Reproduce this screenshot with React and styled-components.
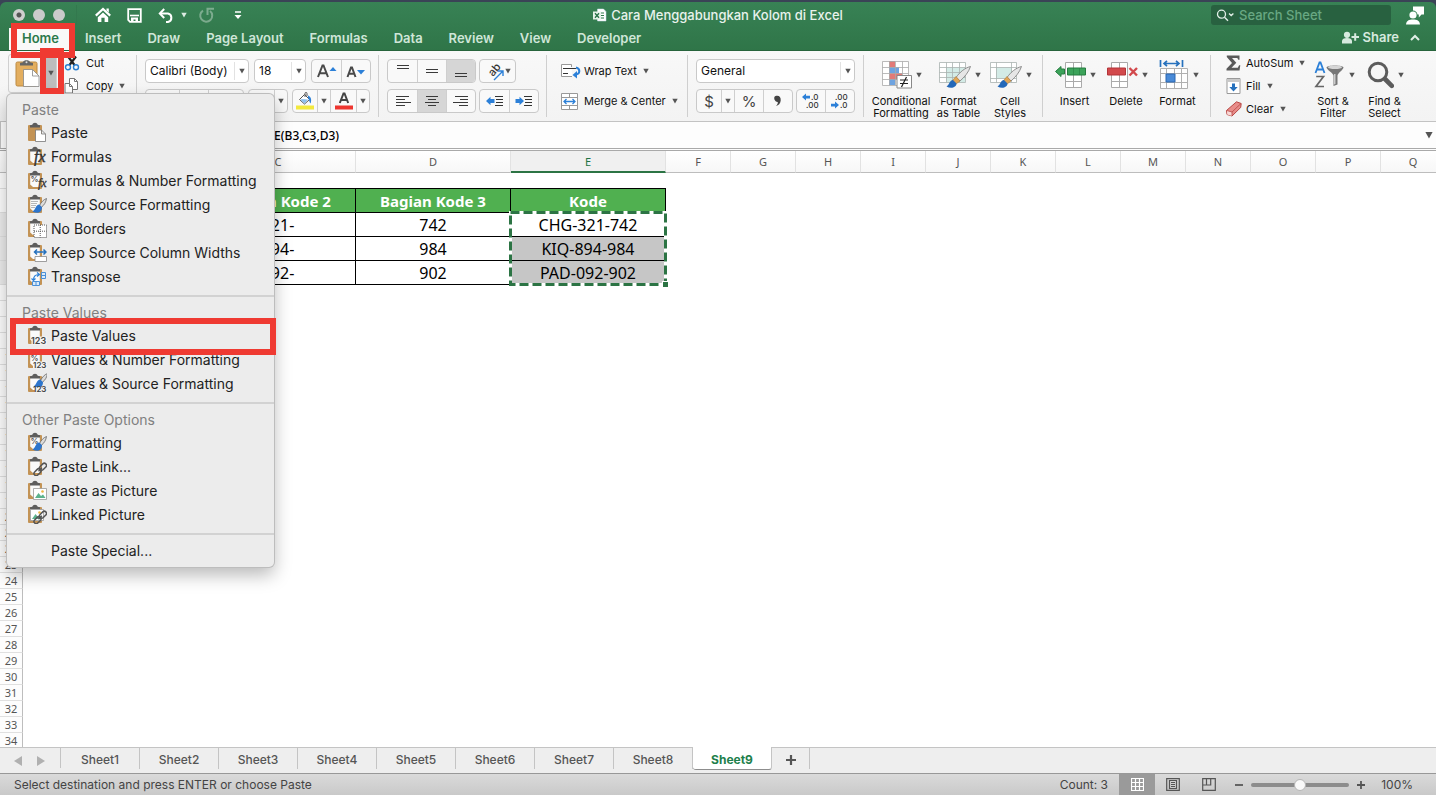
import React from "react";
import styled, { createGlobalStyle, css } from "styled-components";

const UI = `Inter, "Liberation Sans", sans-serif`;
const SHEET = `"Noto Sans", "Open Sans", sans-serif`;

const GlobalStyle = createGlobalStyle`
  *, *::before, *::after { box-sizing: border-box; }
  body { margin: 0; background: #fff; font-family: ${UI}; overflow: hidden; }
  button, input, select { font: inherit; color: inherit; margin: 0; }
  button { background: none; border: 0; padding: 0; cursor: default; }
  svg { display: block; flex: none; }
`;

const Window = styled.div`
  position: relative;
  display: flex;
  flex-direction: column;
  height: 100vh;
  min-height: 640px;
  overflow: hidden;
  background: #fff;
`;

/* ---------- green header ---------- */

const Desktop = styled.div`
  background: #3a4356;
  padding-top: 2px;
`;

const Header = styled.header`
  background: linear-gradient(#388255, #2f7548);
  border-radius: 6px 6px 0 0;
  border-bottom: 1px solid #27643c;
  color: #fff;
`;

const TitleBar = styled.div`
  display: grid;
  grid-template-columns: 1fr auto 1fr;
  align-items: center;
  height: 26px;
`;

const QuickBar = styled.div`
  display: flex;
  align-items: center;
  padding-left: 13px;
`;

const Light = styled.button`
  width: 12px;
  height: 12px;
  margin-right: 8px;
  border-radius: 50%;
  background: ${(p) => (p.$edited ? "radial-gradient(circle, #555 0 2px, #cfcfcf 3px)" : "#cbcbcb")};
`;

const QuickButton = styled.button`
  display: flex;
  align-items: center;
  justify-content: center;
  width: ${(p) => p.$w || 30}px;
  height: 24px;
  color: #fff;
  opacity: ${(p) => (p.$dim ? 0.35 : 1)};
`;

const LightsGap = styled.span`
  width: 13px;
  height: 20px;
  border-left: 1px solid #33784e;
  margin-left: 3px;
`;

const DocTitle = styled.h1`
  display: flex;
  align-items: center;
  gap: 4px;
  margin: 0;
  font-size: 13px;
  font-weight: 500;
  color: #e8f2ec;
`;

const TitleRight = styled.div`
  display: flex;
  align-items: center;
  justify-content: flex-end;
  gap: 15px;
  padding-right: 12px;
`;

const SearchBox = styled.label`
  display: flex;
  align-items: center;
  gap: 3px;
  width: 180px;
  height: 20px;
  padding-left: 5px;
  border-radius: 3px;
  background: #286140;
`;

const SearchInput = styled.input`
  flex: 1;
  min-width: 0;
  padding: 0;
  border: 0;
  outline: 0;
  background: none;
  font-size: 13px;
  font-weight: 500;
  &::placeholder { color: #68a883; opacity: 1; }
`;

const TabBar = styled.nav`
  display: flex;
  align-items: stretch;
  height: 22px;
  padding: 0 16px 0 9px;
`;

const RibbonTab = styled.button`
  height: 22px;
  padding: 0 13px;
  padding-bottom: 2px;
  font-size: 13px;
  font-weight: 600;
  color: #cfe6d8;
  ${(p) => p.$active && css`
    background: #f9f9f9;
    color: #2b7a4b;
  `}
`;

const ShareArea = styled.div`
  display: flex;
  align-items: center;
  gap: 11px;
  margin-left: auto;
  padding-bottom: 4px;
`;

const ShareButton = styled.button`
  display: flex;
  align-items: center;
  gap: 4px;
  font-size: 13px;
  font-weight: 600;
  color: #d7eadf;
`;

/* ---------- ribbon ---------- */

const Ribbon = styled.section`
  display: flex;
  height: 71px;
  background: linear-gradient(#f8f8f8, #f3f3f3);
  border-bottom: 1px solid #c3c3c3;
  font-size: 11px;
  color: #111;
`;

const Group = styled.div`
  display: flex;
  gap: 4px;
  flex: none;
  width: ${(p) => p.$w}px;
  padding-left: ${(p) => p.$pad ?? 8}px;
  position: relative;
  &::after {
    content: "";
    position: absolute;
    right: 0;
    top: 4px;
    height: 62px;
    border-right: 1px solid ${(p) => (p.$last ? "transparent" : "#cfcfcf")};
  }
`;

const Stack = styled.div`
  display: flex;
  flex-direction: column;
  gap: 6px;
  padding-top: 8px;
`;

const Row = styled.div`
  display: flex;
  gap: ${(p) => p.$gap ?? 3}px;
`;

const frame = css`
  height: 24px;
  border: 1px solid #c9c9c9;
  border-radius: 4px;
`;

const Segments = styled.div`
  ${frame}
  display: flex;
  overflow: hidden;
  background: #f9f9f9;
`;

const Segment = styled.button`
  display: flex;
  align-items: center;
  justify-content: center;
  width: ${(p) => p.$w || 29}px;
  color: #444;
  background: ${(p) => (p.$on ? "#d6d6d6" : "transparent")};
  & + & { border-left: 1px solid ${(p) => (p.$soft ? "#e4e4e4" : "#cfcfcf")}; }
`;

const NumberSign = styled(Segment)`
  font-size: 15px;
`;

const SelectFrame = styled.div`
  ${frame}
  display: flex;
  align-items: center;
  width: ${(p) => p.$w}px;
  background: #fff;
  padding-right: 3px;
`;

const Select = styled.select`
  flex: 1;
  min-width: 0;
  height: 22px;
  padding: 0 0 2px 4px;
  border: 0;
  outline: 0;
  appearance: none;
  background: none;
  font-size: 12px;
`;

const SelectArrow = styled.span`
  display: flex;
  align-items: center;
  height: 18px;
  padding-left: 4px;
  border-left: 1px solid #e2e2e2;
`;

const PasteButton = styled.button`
  display: flex;
  width: 49px;
  height: 39px;
  margin-top: 3px;
  padding: 4px 0 0 6px;
  border: 1px solid #d0d0d0;
  border-radius: 3px;
`;

const PasteDrop = styled.span`
  display: flex;
  align-items: center;
  justify-content: center;
  width: 10px;
  height: 33px;
  margin: -3px 0 0 5px;
  background: #bdbdbd;
`;

const TextButton = styled.button`
  display: flex;
  align-items: center;
  gap: 6px;
  height: ${(p) => p.$h || 24}px;
  text-align: left;
  white-space: nowrap;
`;

const IconSlot = styled.span`
  display: flex;
  flex: none;
  align-items: center;
  width: ${(p) => p.$w}px;
  margin-right: -6px;
`;

const SideTools = styled.div`
  display: flex;
  flex-direction: column;
  flex: none;
  width: ${(p) => p.$w}px;
  margin-left: 3px;
`;

const BigButton = styled.button`
  display: flex;
  flex-direction: column;
  align-items: center;
  width: ${(p) => p.$w}px;
  padding-top: 7px;
  line-height: 12px;
  text-align: center;
`;

const BigIcon = styled.span`
  display: flex;
  align-items: center;
  justify-content: center;
  gap: 4px;
  height: 33px;
  margin-bottom: 4px;
  padding-left: 2px;
`;

/* ---------- formula bar ---------- */

const FormulaBar = styled.div`
  display: flex;
  align-items: center;
  height: 29px;
  background: #fdfdfd;
  border-bottom: 3px double #a9a9a9;
`;

const NameBox = styled.input`
  width: 96px;
  height: 26px;
  border: 1px solid #c2c2c2;
  border-width: 0 1px;
  padding: 0 8px;
  font-size: 12px;
`;

const FormulaInput = styled.input`
  flex: 1;
  min-width: 0;
  margin-left: 92px;
  border: 0;
  outline: 0;
  background: none;
  font-family: ${SHEET};
  font-size: 12px;
  font-weight: 500;
  color: #000;
`;

const ExpandButton = styled.button`
  width: 14px;
  height: 24px;
  display: flex;
  align-items: center;
  justify-content: center;
`;

/* ---------- sheet ---------- */

const SheetArea = styled.main`
  flex: 1;
  min-height: 0;
  overflow: hidden;
`;

const Grid = styled.table`
  table-layout: fixed;
  width: 0;
  border-collapse: separate;
  border-spacing: 0;
`;

const Col = styled.col`
  width: ${(p) => p.$w}px;
`;

const ColHead = styled.th`
  height: 22px;
  padding: 0;
  border-right: 1px solid #e2e2e2;
  border-bottom: 1px solid #bdbdbd;
  background: linear-gradient(#fff, #f7f7f7);
  font-family: ${SHEET};
  font-size: 11px;
  font-weight: 400;
  color: #555;
  ${(p) => p.$on && css`
    background: #f0f0f0;
    color: #217346;
    border-bottom: 2px solid #2c7444;
  `}
`;

const RowHead = styled.th`
  height: ${(p) => p.$h}px;
  padding: 0;
  border-right: 1px solid #bdbdbd;
  border-bottom: 1px solid #e0e0e0;
  background: ${(p) => (p.$on ? "#ececec" : "#fdfdfd")};
  font-family: ${SHEET};
  font-size: 11px;
  line-height: 12px;
  font-weight: 400;
  color: #555;
`;

const Cell = styled.td`
  position: relative;
  padding: 0;
  font-family: ${SHEET};
  font-size: 16px;
  line-height: 20px;
  text-align: center;
  white-space: nowrap;
  color: #000;
  ${(p) => p.$edge && css`border-bottom: 1px solid #000;`}
  ${(p) => p.$box && css`
    border-bottom: 1px solid #000;
    border-right: 1px solid #000;
  `}
  ${(p) => p.$head && css`
    background: #50b050;
    color: #fff;
    font-size: 15px;
    font-weight: 700;
  `}
  ${(p) => p.$shade && css`background: #c6c6c6;`}
`;

const Marquee = styled.svg`
  position: absolute;
  left: -2px;
  top: -2px;
  z-index: 1;
  overflow: visible;
`;

/* ---------- bottom bars ---------- */

const SheetTabs = styled.nav`
  display: flex;
  height: 26px;
  background: #eee;
  border-top: 1px solid #c4c4c4;
`;

const TabArrows = styled.div`
  display: flex;
  align-items: center;
  gap: 15px;
  width: 61px;
  height: 20px;
  padding: 5px 0 0 14px;
  border-right: 1px solid #c4c4c4;
`;

const SheetTab = styled.button`
  width: ${(p) => p.$w || 79}px;
  height: 21px;
  padding-top: 2px;
  border-right: 1px solid #c4c4c4;
  font-size: 12px;
  font-weight: 500;
  color: #555;
  display: flex;
  align-items: center;
  justify-content: center;
  ${(p) => p.$on && css`
    height: 23px;
    margin-top: -1px;
    background: #fff;
    border-bottom: 1px solid #8d8d8d;
    border-radius: 0 0 3px 3px;
    color: #217f4b;
    font-weight: 700;
  `}
`;

const StatusBar = styled.footer`
  display: flex;
  align-items: center;
  height: 22px;
  padding: 0 23px 0 14px;
  background: linear-gradient(#dadada, #c9c9c9);
  border-top: 1px solid #989898;
  font-size: 12px;
  color: #444;
`;

const Count = styled.span`
  margin-left: auto;
  margin-right: 11px;
`;

const ViewButton = styled.button`
  display: flex;
  align-items: center;
  justify-content: center;
  width: 36px;
  height: 21px;
  color: ${(p) => (p.$on ? "#fff" : "#555")};
  background: ${(p) => (p.$on ? "#9a9a9a" : "transparent")};
`;

const ZoomButton = styled.button`
  display: flex;
  align-items: center;
  justify-content: center;
  width: 24px;
  height: 20px;
`;

const ZoomSlider = styled.input`
  appearance: none;
  width: 98px;
  height: 12px;
  background: none;
  &::-webkit-slider-runnable-track {
    height: 4px;
    border-radius: 2px;
    background: #8c8c8c;
  }
  &::-webkit-slider-thumb {
    appearance: none;
    width: 12px;
    height: 12px;
    margin-top: -4px;
    border: 1px solid #b5b5b5;
    border-radius: 50%;
    background: #fafafa;
  }
`;

const ZoomValue = styled.span`
  width: 40px;
  text-align: right;
`;

/* ---------- paste menu ---------- */

const Menu = styled.div`
  position: absolute;
  left: 7px;
  top: 94px;
  z-index: 3;
  width: 267px;
  padding: 4px 0;
  border-radius: 5px;
  background: #ececec;
  box-shadow: 0 0 0 1px #bdbdbd, 0 8px 18px rgba(0, 0, 0, 0.28);
  font-size: 14px;
  color: #222;
`;

const MenuHead = styled.div`
  height: 23px;
  padding-left: 15px;
  line-height: 24px;
  color: #808080;
`;

const MenuItem = styled.button`
  display: flex;
  align-items: center;
  gap: 4px;
  width: 100%;
  height: 24px;
  padding-left: ${(p) => (p.$plain ? 44 : 20)}px;
  padding-bottom: 2px;
  text-align: left;
  white-space: nowrap;
`;

const MenuRule = styled.hr`
  height: 2px;
  margin: 6px 0 4px;
  border: 0;
  background: #d2d2d2;
`;

const Highlight = styled.div`
  position: absolute;
  z-index: 4;
  left: ${(p) => p.$x}px;
  top: ${(p) => p.$y}px;
  width: ${(p) => p.$w}px;
  height: ${(p) => p.$h}px;
  border: 6px solid #ef3a32;
  pointer-events: none;
`;

/* ---------- icons ---------- */

const Caret = ({ c = "#555", s = 6 }) => (
  <svg width={s} height={s} viewBox="0 0 6 6"><path d="M.3.800h5.400L3 5.600z" fill={c} /></svg>
);

const Svg = ({ w = 20, h = 20, box, children }) => (
  <svg width={w} height={h} viewBox={box || `0 0 ${w} ${h}`} fill="none" aria-hidden="true">{children}</svg>
);

const HomeIcon = () => (
  <Svg w={16} h={16}>
    <path d="M.8 8.600 8 2l7.200 6.600" stroke="#fff" strokeWidth="2.200" />
    <path d="M11.500 1.500h2.300v4l-2.300-2z" fill="#fff" />
    <path d="M8 5.600 2.800 10.300V15h3.600v-4.200h3.200V15h3.600v-4.700z" fill="#fff" />
  </Svg>
);

const SaveIcon = () => (
  <Svg w={15} h={15}>
    <path d="M1.200 1.200h12.600v12.600H3L1.200 12z" stroke="#fff" strokeWidth="1.800" />
    <path d="M3 7.500h9" stroke="#fff" strokeWidth="1.600" />
    <path d="M4 9.500h7V14H8.500v-2.500h-2V14H4z" fill="#fff" />
  </Svg>
);

const UndoIcon = () => (
  <Svg w={16} h={15}>
    <path d="M2 5.500h8a4.300 4.300 0 0 1 0 8.400H8" stroke="#fff" strokeWidth="2" />
    <path d="M6.200 1 1.800 5.500 6.200 10" stroke="#fff" strokeWidth="2" />
  </Svg>
);

const RedoIcon = () => (
  <Svg w={16} h={16}>
    <path d="M5 3.600A6 6 0 1 0 12 4" stroke="#fff" strokeWidth="2" />
    <path d="M9.500 8V1.800H16" stroke="#fff" strokeWidth="2" />
  </Svg>
);

const CustomizeIcon = () => (
  <Svg w={8} h={9}><path d="M1 1h6" stroke="#fff" strokeWidth="1.500" /><path d="M.5 4h7L4 8z" fill="#fff" /></Svg>
);

const DocIcon = () => (
  <Svg w={14} h={14}>
    <path d="M4.500 1h6L13 3.500V13H4.500z" fill="#fff" stroke="#cde" strokeWidth=".5" />
    <path d="M7 5h4M7 7.500h4M7 10h4" stroke="#2f7a4a" />
    <path d="M0 3.500h8v8H0z" fill="#e6f3ea" />
    <path d="m2 5.300 4 4.500m0-4.500-4 4.500" stroke="#257145" strokeWidth="1.300" />
  </Svg>
);

const SearchIcon = () => (
  <Svg w={20} h={13}>
    <circle cx="5.500" cy="5.200" r="4" stroke="#e4f0e9" strokeWidth="1.300" />
    <path d="m8.500 8.200 3.500 3.600" stroke="#e4f0e9" strokeWidth="1.400" />
    <path d="m13 4.500 2.200 2 2.200-2" stroke="#e4f0e9" strokeWidth="1.300" />
  </Svg>
);

const PersonChatIcon = () => (
  <Svg w={18} h={19}>
    <circle cx="7" cy="9" r="3.600" fill="#fff" />
    <path d="M0 18.500c.4-4 3-5 7-5s6.600 1 7 5z" fill="#fff" />
    <path d="M7 .5h11v8h-2.500l-2.700 3V8.500h-1.300A5 5 0 0 0 7 4.500z" fill="#fff" />
  </Svg>
);

const ShareIcon = () => (
  <Svg w={17} h={13}>
    <circle cx="5" cy="3.800" r="3.100" fill="#d7eadf" />
    <path d="M0 12.500V10c0-2 2-3 5-3s5 1 5 3v2.500z" fill="#d7eadf" />
    <path d="M9.500 6H17M13.200 2.200v7.600" stroke="#d7eadf" strokeWidth="2" />
  </Svg>
);

const Chevron = () => (
  <Svg w={10} h={7}><path d="m1 6 4-4 4 4" stroke="#e1efe7" strokeWidth="2" /></Svg>
);

const BigPasteIcon = () => (
  <Svg w={26} h={28}>
    <rect x="1" y="3" width="21" height="24" rx="1.500" fill="#e3ae5f" stroke="#bd8a43" />
    <path d="M5 6.500V4l3-.8C8.500.6 14.500.6 15 3.200l3 .8v2.500z" fill="#666" />
    <circle cx="11.500" cy="3.300" r="1" fill="#ddd" />
    <path d="M8.500 10.500h9l6.500 6.500v10.500H8.500z" fill="#fff" stroke="#888" strokeWidth=".8" />
    <path d="M17.500 10.500V17H24" stroke="#888" strokeWidth=".8" />
  </Svg>
);

const CutIcon = () => (
  <Svg w={16} h={16}>
    <path d="M4 1.500 10.500 10M12 1.500 5.500 10" stroke="#222" strokeWidth="2.200" />
    <circle cx="4" cy="12.300" r="2.500" stroke="#2b7fd0" strokeWidth="1.400" />
    <circle cx="12" cy="12.300" r="2.500" stroke="#2b7fd0" strokeWidth="1.400" />
  </Svg>
);

const CopyIcon = () => (
  <Svg w={16} h={16}>
    <path d="M5.500.5h5l3 3v8h-8z" fill="#fff" stroke="#777" />
    <path d="M10.500.5v3h3" stroke="#777" />
    <path d="M1 5.500h4.500l3 3V15H1z" fill="#fff" stroke="#777" />
    <path d="M5.500 5.500v3h3" stroke="#777" />
  </Svg>
);

const FontSizeIcon = ({ up }) => (
  <Svg w={22} h={16}>
    <path d={up ? "M2 14 6.500 2.500h1L12 14M3.800 10.300h6.400" : "M2.500 14 6 4.500h1L10.500 14M4 10.800h5"} stroke="#4a4a4a" strokeWidth="2" />
    <path d={up ? "M13.500 8 17 4l3.500 4z" : "M12 7h8l-4 4.500z"} fill="#2c80d8" />
  </Svg>
);

const Lines = ({ rows }) => (
  <Svg w={16} h={16}>
    {rows.map(([x, y, w]) => <path key={y} d={`M${x} ${y}h${w}`} stroke="#3a3a3a" strokeWidth="1" />)}
  </Svg>
);

const vTop = [[2, 2.5, 12], [2, 5.5, 12]];
const vMid = [[2, 6.5, 12], [2, 9.5, 12]];
const vBot = [[2, 10.5, 12], [2, 13.5, 12]];
const hLeft = [[1, 3.5, 13], [1, 6.5, 9], [1, 9.5, 15], [1, 12.5, 9]];
const hMid = [[2, 3.5, 12], [4, 6.5, 8], [1, 9.5, 14], [4, 12.5, 8]];
const hRight = [[2, 3.5, 13], [7, 6.5, 8], [0, 9.5, 15], [6, 12.5, 9]];

const OrientIcon = () => (
  <Svg w={20} h={20}>
    <text x="0" y="0" transform="translate(8 16) rotate(-50)" fontFamily="Inter, sans-serif" fontSize="11" fontWeight="500" fill="#333">ab</text>
    <path d="m9 19 9-9M13 10h5v5" stroke="#2c80d8" strokeWidth="1.400" />
  </Svg>
);

const IndentIcon = ({ right }) => (
  <Svg w={18} h={14}>
    <path d="M9 2.500h8M10 5.500h7M10 8.500h7M9 11.500h8" stroke="#333" />
    <path d={right ? "M9 7 4.500 2.700v2.300H.5v4h4v2.300z" : "M0 7l4.500-4.300v2.300h4v4h-4v2.300z"} fill="#2c80d8" />
  </Svg>
);

const WrapIcon = () => (
  <Svg w={20} h={16}>
    <path d="M11 13.500H.5V1.500h10V4" fill="#fff" stroke="#999" />
    <path d="M2 5.500h13M2 10.500h5" stroke="#333" strokeWidth="1.200" />
    <path d="M15 4.500c4.500 1 4.500 6.500-.5 7" stroke="#2c80d8" strokeWidth="2" />
    <path d="m16 8-4.500 4L16 15.500z" fill="#2c80d8" />
  </Svg>
);

const MergeIcon = () => (
  <Svg w={17} h={17}>
    <path d="M.5.500h16v16H.5zM.5 4.500h16M.5 12.500h16M8.500.5v4M8.500 12.500v4" fill="#fff" stroke="#999" />
    <path d="M3 8.500h11M5.500 6 3 8.500 5.500 11M11.500 6 14 8.500 11.500 11" stroke="#2c80d8" strokeWidth="1.300" />
  </Svg>
);

const FillColorIcon = () => (
  <Svg w={20} h={20}>
    <path d="M1 14.500h18v4H1z" fill="#f3e93e" />
    <path d="m4.500 8.500 5-5 5 5-5 4.500z" fill="#fff" stroke="#555" />
    <path d="m6.500 8 6.500.5-3.500 4-4-3.500z" fill="#8ec0ee" />
    <path d="M10 6V2.500c0-1.500 2-1.500 2 0V5" stroke="#555" />
    <path d="M13 4.500c3 1 4 4.500 2.500 8-1.500-1.500-1-4-2.500-5.500z" fill="#2c80d8" />
  </Svg>
);

const FontColorIcon = () => (
  <Svg w={20} h={20}>
    <path d="M1 14.500h18v4H1z" fill="#ee3630" />
    <path d="M5.800 12 9.500 2.500h1l3.700 9.500M7.200 9h5.600" stroke="#444" strokeWidth="2" />
  </Svg>
);

const CommaIcon = () => (
  <Svg w={10} h={14}><path d="M2.500 2c3.500-1 5.500 1 5.200 4.500C7.500 9.500 5.500 11.500 3 12c1.700-1.800 2-3 1.700-4C1.500 8 0 3 2.500 2z" fill="#444" /></Svg>
);

const DecimalIcon = ({ less }) => (
  <Svg w={20} h={20}>
    <g fontFamily="Inter, sans-serif" fontSize="8" fontWeight="500" fill="#333">
      <text x={less ? 5 : 10} y="9">{less ? ".00" : ".0"}</text>
      <text x={less ? 10 : 5} y="17">{less ? ".0" : ".00"}</text>
    </g>
    <path d={less ? "M9 14 5 10.500v2.300H1v2.600h4v2.200z" : "M1 6l4-3.500v2.300h4v2.600H5v2.200z"} fill="#2c80d8" />
  </Svg>
);

const CondIcon = () => (
  <Svg w={30} h={28}>
    <path d="M.5.500h26v24H.5z" fill="#fff" />
    <path d="M7 0h6v6H7zM7 12h13v6H7z" fill="#e27a77" />
    <path d="M7 6h10v6H7zM7 18h6v6H7z" fill="#6ea3e0" />
    <path d="M.5.500h26v24H.5zM.5 6.500h26M.5 12.500h26M.5 18.500h26M7.500.5v24M13.500.5v24M20.500.5v24" stroke="#aaa" strokeWidth=".8" />
    <path d="M15 14.500h14.500V27H15z" fill="#fff" stroke="#888" />
    <path d="M18 19h8M18 22.500h8M24.500 16l-5 10" stroke="#222" strokeWidth="1.200" />
  </Svg>
);

const BrushIcon = ({ table }) => (
  <Svg w={32} h={28}>
    <path d="M.5 1.500h26v20H.5z" fill="#fff" />
    <path d={table ? "M7 6.500h19v15H7z" : "M6 6.500h16v11H6z"} fill="#d3ebe6" />
    <path d={table ? "M.5 1.500h26v20H.5zM.5 6.500h26M.5 11.500h26M.5 16.500h26M7.500 1.500v20M13.500 1.500v20M20.500 1.500v20" : "M.5 1.500h26v20H.5zM.5 6.500h26M6.500 1.500v20M.5 17.500h26M21.500 1.500v20"} stroke="#a9b2b0" strokeWidth=".8" />
    <path d="M31.500 5.500c-6 1.500-11 6-14.500 11l4 3.500c4.500-4 8.500-8.500 10.500-14.500z" fill="#e6e6e6" stroke="#777" strokeWidth=".8" />
    <path d="m17 15.500-3.500 4 3.500 3.500 4-3z" fill="#e0a657" stroke="#b07b35" strokeWidth=".6" />
    <path d="M14 19c-3.500 0-3 4-6.500 6.500 4.500 2.500 10 1 10-3z" fill="#2468b8" />
  </Svg>
);

const InsertIcon = () => (
  <Svg w={31} h={28}>
    <path d="M10.500 1.500h16v25h-16zM18.500 1.500v25M10.500 20.500h16" fill="#fff" stroke="#aaa" />
    <path d="M12.500 7h18v7h-18z" fill="#3ca35a" stroke="#267c40" />
    <path d="M.5 10.500 6 5.500V8h3.500v5H6v2.500z" fill="#3ca35a" stroke="#267c40" />
    <path d="M18.500 7v7M24.500 7v7" stroke="#267c40" strokeWidth=".6" />
  </Svg>
);

const DeleteIcon = () => (
  <Svg w={31} h={28}>
    <path d="M4.500 1.500h16v25h-16zM12.500 1.500v25M4.500 20.500h16" fill="#fff" stroke="#aaa" />
    <path d="M.5 7h18v7H.5z" fill="#d2494c" stroke="#b33538" />
    <path d="m22.500 7 7.500 7.500m0-7.500-7.500 7.500" stroke="#d2494c" strokeWidth="2.400" />
  </Svg>
);

const FormatIcon = () => (
  <Svg w={30} h={29}>
    <path d="M1.500 8.500h27v20h-27zM1.500 13.500h27M1.500 22.500h27M7.500 8.500v20M15.500 8.500v20M22.500 8.500v20" fill="#fff" stroke="#b0b0b0" />
    <path d="M7 14h9v8H7z" fill="#4a8bd8" stroke="#2b67b0" />
    <path d="M1.500 0v7M23.500 0v7M5 3.500h15M8 .8 5 3.500l3 2.700M17 .8l3 2.700-3 2.700" stroke="#2671bd" strokeWidth="1.700" />
  </Svg>
);

const SigmaIcon = () => (
  <Svg w={15} h={16}><path d="M.8.500h12.700v4.200h-1.200L11.300 3H6l4.300 4.700L5.500 12.800h6.300l1.300-2.500h1.200l-.8 5.200H.5v-1.800L6 8 .8 2z" fill="#5a5a5a" /></Svg>
);

const FillIcon = () => (
  <Svg w={15} h={16}>
    <path d="M1 .5h13v15H1z" fill="#fff" stroke="#999" />
    <path d="M1 1h13v3H1z" fill="#c9c9c9" />
    <path d="M6 5.500h3V9h2.700L7.500 13.500 3.300 9H6z" fill="#2671bd" />
  </Svg>
);

const EraserIcon = () => (
  <Svg w={16} h={16}>
    <path d="m10.500.800 4.700 1.700-.5 4L6 15 1 13.500.5 9.500z" fill="#e88d8a" stroke="#b84845" />
    <path d="m1 9.500 5 1.500v4L1.200 13.500z" fill="#f9d9d6" />
    <path d="m.8 9.500 5.200 1.500v4M6 11l9-8.500" stroke="#b84845" strokeWidth=".8" />
  </Svg>
);

const SortIcon = () => (
  <Svg w={31} h={27}>
    <path d="M1.500 12 5.500 1.500h1l4 10.500M3 8.500h6" stroke="#2c80d8" strokeWidth="1.800" />
    <path d="M2.200 15.500h7.300L2 25.500h8" stroke="#666" strokeWidth="1.700" />
    <path d="M12.500 6.500c0-2.700 17-2.700 17 0 0 2-6 6-6 8v9l-4 1.500V14.500c0-2-7-6-7-8z" fill="#777" />
    <ellipse cx="21" cy="6.300" rx="7" ry="1.800" fill="#d5d5d5" />
    <path d="M20 13h1.500v10l-1.500.5z" fill="#ccc" />
  </Svg>
);

const FindIcon = () => (
  <Svg w={27} h={28}>
    <circle cx="11" cy="11" r="8.800" stroke="#5c5c5c" strokeWidth="3" />
    <path d="m18 18 6.800 6.800" stroke="#5c5c5c" strokeWidth="4.600" strokeLinecap="round" />
  </Svg>
);

const label = { fontFamily: "Inter, sans-serif", fontWeight: 600, fill: "#444" };
const serif = { fontFamily: "Liberation Serif, serif", fontStyle: "italic", fontWeight: 400, fill: "#333" };

const Percent = () => <text x="3.500" y="12" fontFamily="Inter, sans-serif" fontSize="8" fontWeight="600" fill="#555">%</text>;

const Brush = () => (
  <g>
    <path d="M19.500 4.500c-3 1-5.500 4-7 7l2 1.700c2.500-2 4.500-5 5-8.700z" fill="#dcdcdc" stroke="#666" strokeWidth=".8" />
    <path d="M12.300 10.500c-4 .5-3 4.500-6.800 7 4.500 2.500 9.500 1.500 9.500-4.300z" fill="#2d75cc" />
  </g>
);

const LinkMark = () => (
  <g stroke="#555" strokeWidth="1.500">
    <rect x="12" y="8.500" width="8" height="4.400" rx="2.200" transform="rotate(-45 16 10.700)" />
    <rect x="6.500" y="14" width="8" height="4.400" rx="2.200" transform="rotate(-45 10.500 16.200)" />
    <path d="m11.500 15.200 3.500-3.500" />
  </g>
);

const Picture = () => (
  <g>
    <path d="M6.500 8.500h13v11h-13z" fill="#fff" stroke="#999" strokeWidth=".8" />
    <path d="m8 18 3.500-5 2.500 3 2-1.500 2.500 3.500z" fill="#5db28c" />
    <circle cx="15.500" cy="11.500" r="1.300" fill="#eeb541" />
  </g>
);

const marks = {
  paste: <path d="M8.500 8h6l4 4v7.500h-10zM14.500 8v4h4" fill="#fff" stroke="#777" strokeWidth=".8" />,
  fx: <text x="7" y="16" fontSize="16" {...serif} strokeWidth=".4" stroke="#333">fx</text>,
  pctfx: <><Percent /><text x="11" y="17" fontSize="12" {...serif} strokeWidth=".3" stroke="#333">fx</text></>,
  brush: <><path d="M4 7.500h7M4 9.500h6M4 11.500h5M4 13.500h4" stroke="#999" strokeWidth=".7" /><Brush /></>,
  noborder: <><path d="M7 7h12.500v12.500H7z" fill="#fff" /><path d="M7 7h12.500v12.500H7zM7 13.200h12.500M13.200 7v12.500" stroke="#555" strokeDasharray="1 1" /></>,
  widths: <><path d="M8 14.500h11.500v5H8z" fill="#fff" stroke="#888" strokeWidth=".8" /><path d="M7.500 10h11.500M10 7.500 7.500 10l2.500 2.500M16.500 7.500 19 10l-2.500 2.500" stroke="#2671bd" strokeWidth="1.500" /></>,
  transpose: <><path d="M14.500 6.500h4v6h-4zM14.500 9.500h4M5.500 15.500h7v4h-7zM9 15.500v4" fill="#dcebf9" stroke="#4a90d8" /><path d="M6.500 14c0-4 2-5.500 5.500-5.500M10 6.500l2.500 2-2.500 2M4.500 12.500l2 2 2-2" stroke="#2c80d8" strokeWidth="1.200" /></>,
  v123: <><path d="M4.500 11.500H20v8H4.500z" fill="#f4f4f4" /><text x="4" y="19" fontSize="9" {...label}>123</text></>,
  pct123: <><Percent /><path d="M6 12.500h14v7H6z" fill="#f4f4f4" /><text x="6" y="19" fontSize="8" {...label}>123</text></>,
  brush123: <><g transform="translate(1 -4)"><Brush /></g><path d="M8 14h12v6H8z" fill="#f0f0f0" /><text x="6" y="19" fontSize="8" {...label}>123</text></>,
  pctbrush: <><Percent /><Brush /></>,
  link: <LinkMark />,
  picture: <Picture />,
  linkpic: <><g transform="translate(-3 -3)"><Picture /></g><LinkMark /></>,
};

const ClipIcon = ({ kind }) => (
  <Svg>
    <rect x="1" y="3" width="14" height="16" rx="1" fill="#c39355" />
    {kind !== "paste" && <path d="M3.200 5h9.600v12H6L3.200 14.500z" fill="#fafafa" />}
    <path d="M3 5.500V3.300l2.300-.5C5.700 0 10.300 0 10.700 2.800l2.300.5v2.200z" fill="#5d5d5d" />
    {marks[kind]}
  </Svg>
);

const NormalViewIcon = () => (
  <Svg w={13} h={13}><path d="M.5.500h12v12H.5zM.5 4.500h12M.5 8.500h12M4.500.5v12M8.500.5v12" stroke="#fff" strokeWidth="1.200" /></Svg>
);
const PageViewIcon = () => (
  <Svg w={14} h={13}><path d="M.7.700h12.600v11.600H.7zM3.500 2.500h7v8h-7zM5 4.500h4M5 6.500h4M5 8.500h4" stroke="#555" strokeWidth="1.200" /></Svg>
);
const BreakViewIcon = () => (
  <Svg w={14} h={13}><path d="M.7.700h12.600v11.600H.7zM4.500.7v6.300M.7 7h8V.7" stroke="#555" strokeWidth="1.200" /></Svg>
);
const Plus = ({ s = 9, minus }) => (
  <Svg w={s} h={s} box="0 0 10 10"><path d={minus ? "M0 5h10" : "M0 5h10M5 0v10"} stroke="#555" strokeWidth="2.200" /></Svg>
);

/* ---------- data ---------- */

const TABS = ["Home", "Insert", "Draw", "Page Layout", "Formulas", "Data", "Review", "View", "Developer"];

const MENU = [
  { title: "Paste", items: [["paste", "Paste"], ["fx", "Formulas"], ["pctfx", "Formulas & Number Formatting"], ["brush", "Keep Source Formatting"], ["noborder", "No Borders"], ["widths", "Keep Source Column Widths"], ["transpose", "Transpose"]] },
  { title: "Paste Values", items: [["v123", "Paste Values"], ["pct123", "Values & Number Formatting"], ["brush123", "Values & Source Formatting"]] },
  { title: "Other Paste Options", items: [["pctbrush", "Formatting"], ["link", "Paste Link..."], ["picture", "Paste as Picture"], ["linkpic", "Linked Picture"]] },
];

const COLS = [["A", 23], ["B", 155], ["C", 155], ["D", 155], ["E", 155], ..."FGHIJKLMNOPQ".split("").map((l) => [l, 65])];
const ROW_COUNT = 34;

const DATA = {
  2: ["", "Bagian Kode 2", "Bagian Kode 3", "Kode"],
  3: ["", "321-", "742", "CHG-321-742"],
  4: ["", "894-", "984", "KIQ-894-984"],
  5: ["", "092-", "902", "PAD-092-902"],
};

const rowHeight = (n) => (n >= 2 && n <= 5 ? 24 : 16);

function SheetRow({ n }) {
  const data = DATA[n];
  return (
    <tr>
      <RowHead scope="row" $h={rowHeight(n)} $on={n >= 3 && n <= 5}>{n}</RowHead>
      {(data || n === 1) && COLS.map(([name], i) => {
        const inside = i >= 1 && i <= 4;
        return (
          <Cell key={name} $edge={n === 1 && inside} $box={data && inside} $head={n === 2 && inside} $shade={n > 3 && i === 4}>
            {data && inside ? data[i - 1] : null}
            {n === 3 && i === 4 && (
              <Marquee width="157" height="74" aria-hidden="true">
                <rect x="1.500" y="1.500" width="155" height="72" fill="none" stroke="#fff" strokeWidth="3" />
                <rect x="1.500" y="1.500" width="155" height="72" fill="none" stroke="#2c7444" strokeWidth="3" strokeDasharray="9 4" />
                <rect x="153.500" y="70.500" width="6" height="6" fill="#2c7444" stroke="#fff" strokeWidth="1" />
              </Marquee>
            )}
          </Cell>
        );
      })}
    </tr>
  );
}

const DropSelect = ({ w, name, value, options }) => (
  <SelectFrame $w={w}>
    <Select aria-label={name} defaultValue={value}>
      {options.map((o) => <option key={o}>{o}</option>)}
    </Select>
    <SelectArrow><Caret /></SelectArrow>
  </SelectFrame>
);

const Tool = ({ h, slot = 23, icon, caret, children }) => (
  <TextButton $h={h}>
    <IconSlot $w={slot}>{icon}</IconSlot>
    {children}
    {caret && <Caret />}
  </TextButton>
);

const Big = ({ w, icon, children }) => (
  <BigButton $w={w}><BigIcon>{icon}<Caret /></BigIcon>{children}</BigButton>
);

function RibbonBar() {
  return (
    <Ribbon aria-label="Home">
      <Group $w={137}>
        <PasteButton aria-label="Paste"><BigPasteIcon /><PasteDrop><Caret /></PasteDrop></PasteButton>
        <SideTools $w={66}>
          <Tool h={23} slot={22} icon={<CutIcon />}>Cut</Tool>
          <Tool h={23} slot={22} icon={<CopyIcon />} caret>Copy</Tool>
        </SideTools>
      </Group>
      <Group $w={242}>
        <Stack>
          <Row $gap={5}>
            <DropSelect w={104} name="Font" value="Calibri (Body)" options={["Calibri (Body)", "Arial"]} />
            <DropSelect w={52} name="Font size" value="18" options={["12", "18", "24"]} />
            <Segments>
              <Segment aria-label="Increase font size"><FontSizeIcon up /></Segment>
              <Segment aria-label="Decrease font size"><FontSizeIcon /></Segment>
            </Segments>
          </Row>
          <Row $gap={4}>
            <Segments>
              <Segment $w={33} aria-label="Bold" />
              <Segment $w={29} aria-label="Italic" />
              <Segment $w={35} aria-label="Underline" />
            </Segments>
            <Segments>
              <Segment $w={25} aria-label="Borders"><Lines rows={[[1, 2.5, 14]]} /></Segment>
              <Segment $w={13} $soft aria-label="Border options"><Caret /></Segment>
            </Segments>
            <Segments>
              <Segment $w={24} aria-label="Fill color"><FillColorIcon /></Segment>
              <Segment $w={13} $soft aria-label="Fill color options"><Caret /></Segment>
              <Segment $w={26} aria-label="Font color"><FontColorIcon /></Segment>
              <Segment $w={13} $soft aria-label="Font color options"><Caret /></Segment>
            </Segments>
          </Row>
        </Stack>
      </Group>
      <Group $w={168}>
        <Stack>
          <Row>
            <Segments>
              <Segment aria-label="Top align"><Lines rows={vTop} /></Segment>
              <Segment aria-label="Middle align"><Lines rows={vMid} /></Segment>
              <Segment $on aria-label="Bottom align"><Lines rows={vBot} /></Segment>
            </Segments>
            <Segments>
              <Segment $w={35} aria-label="Orientation"><OrientIcon /><Caret /></Segment>
            </Segments>
          </Row>
          <Row>
            <Segments>
              <Segment aria-label="Align left"><Lines rows={hLeft} /></Segment>
              <Segment $on aria-label="Center"><Lines rows={hMid} /></Segment>
              <Segment aria-label="Align right"><Lines rows={hRight} /></Segment>
            </Segments>
            <Segments>
              <Segment aria-label="Decrease indent"><IndentIcon /></Segment>
              <Segment aria-label="Increase indent"><IndentIcon right /></Segment>
            </Segments>
          </Row>
        </Stack>
      </Group>
      <Group $w={141} $pad={14}>
        <Stack>
          <Tool icon={<WrapIcon />} caret>Wrap Text</Tool>
          <Tool icon={<MergeIcon />} caret>Merge &amp; Center</Tool>
        </Stack>
      </Group>
      <Group $w={176}>
        <Stack>
          <DropSelect w={159} name="Number format" value="General" options={["General", "Number", "Text"]} />
          <Row>
            <Segments>
              <NumberSign $w={24} aria-label="Currency">$</NumberSign>
              <Segment $w={13} $soft aria-label="Currency options"><Caret /></Segment>
              <NumberSign $w={29} aria-label="Percent">%</NumberSign>
              <Segment $w={29} aria-label="Comma style"><CommaIcon /></Segment>
            </Segments>
            <Segments>
              <Segment $w={28} aria-label="Increase decimal"><DecimalIcon /></Segment>
              <Segment $w={29} aria-label="Decrease decimal"><DecimalIcon less /></Segment>
            </Segments>
          </Row>
        </Stack>
      </Group>
      <Group $w={179} $pad={5}>
        <Row $gap={0}>
          <Big w={64} icon={<CondIcon />}>Conditional<br />Formatting</Big>
          <Big w={51} icon={<BrushIcon table />}>Format<br />as Table</Big>
          <Big w={52} icon={<BrushIcon />}>Cell<br />Styles</Big>
        </Row>
      </Group>
      <Group $w={168} $pad={6}>
        <Row $gap={0}>
          <Big w={51} icon={<InsertIcon />}>Insert</Big>
          <Big w={52} icon={<DeleteIcon />}>Delete</Big>
          <Big w={51} icon={<FormatIcon />}>Format</Big>
        </Row>
      </Group>
      <Group $w={222} $pad={12} $last>
        <SideTools $w={77}>
          <Tool h={23} slot={20} icon={<SigmaIcon />} caret>AutoSum</Tool>
          <Tool h={23} slot={20} icon={<FillIcon />} caret>Fill</Tool>
          <Tool h={23} slot={20} icon={<EraserIcon />} caret>Clear</Tool>
        </SideTools>
        <Row $gap={0}>
          <Big w={52} icon={<SortIcon />}>Sort &amp;<br />Filter</Big>
          <Big w={51} icon={<FindIcon />}>Find &amp;<br />Select</Big>
        </Row>
      </Group>
    </Ribbon>
  );
}

export default function App() {
  return (
    <Window>
      <GlobalStyle />
      <Desktop>
        <Header>
          <TitleBar>
            <QuickBar>
              <Light $edited aria-label="Close" />
              <Light aria-label="Minimize" />
              <Light aria-label="Full screen" />
              <LightsGap />
              <QuickButton $w={28} aria-label="Home"><HomeIcon /></QuickButton>
              <QuickButton $w={34} aria-label="Save"><SaveIcon /></QuickButton>
              <QuickButton aria-label="Undo"><UndoIcon /></QuickButton>
              <QuickButton $w={5} aria-label="Undo history"><Caret c="#dcebe2" /></QuickButton>
              <QuickButton $w={40} $dim aria-label="Redo"><RedoIcon /></QuickButton>
              <QuickButton $w={24} aria-label="Customize toolbar"><CustomizeIcon /></QuickButton>
            </QuickBar>
            <DocTitle><DocIcon />Cara Menggabungkan Kolom di Excel</DocTitle>
            <TitleRight>
              <SearchBox>
                <SearchIcon />
                <SearchInput type="text" aria-label="Search Sheet" placeholder="Search Sheet" />
              </SearchBox>
              <PersonChatIcon />
            </TitleRight>
          </TitleBar>
          <TabBar>
            {TABS.map((t, i) => <RibbonTab key={t} $active={i === 0}>{t}</RibbonTab>)}
            <ShareArea>
              <ShareButton><ShareIcon />Share</ShareButton>
              <button aria-label="Collapse ribbon"><Chevron /></button>
            </ShareArea>
          </TabBar>
        </Header>
      </Desktop>

      <RibbonBar />

      <FormulaBar>
        <NameBox aria-label="Name box" />
        <FormulaInput aria-label="Formula" defaultValue="=CONCATENATE(B3,C3,D3)" />
        <ExpandButton aria-label="Expand formula bar"><Caret s={8} /></ExpandButton>
      </FormulaBar>

      <SheetArea>
        <Grid>
          <colgroup>
            <Col $w={23} />
            {COLS.map(([name, w]) => <Col key={name} $w={w} />)}
          </colgroup>
          <thead>
            <tr>
              <ColHead aria-label="Select all" />
              {COLS.map(([name]) => <ColHead key={name} scope="col" $on={name === "E"}>{name}</ColHead>)}
            </tr>
          </thead>
          <tbody>
            {Array.from({ length: ROW_COUNT }, (_, i) => <SheetRow key={i} n={i + 1} />)}
          </tbody>
        </Grid>
      </SheetArea>

      <SheetTabs>
        <TabArrows>
          <button aria-label="Previous sheet"><Svg w={8} h={12}><path d="M8 1v10L0 6z" fill="#b0b0b0" /></Svg></button>
          <button aria-label="Next sheet"><Svg w={8} h={12}><path d="M0 1v10l8-5z" fill="#b0b0b0" /></Svg></button>
        </TabArrows>
        {Array.from({ length: 9 }, (_, i) => <SheetTab key={i} $on={i === 8}>Sheet{i + 1}</SheetTab>)}
        <SheetTab $w={38} aria-label="Add sheet"><Plus s={10} /></SheetTab>
      </SheetTabs>

      <StatusBar>
        <span>Select destination and press ENTER or choose Paste</span>
        <Count>Count: 3</Count>
        <ViewButton $on aria-label="Normal view"><NormalViewIcon /></ViewButton>
        <ViewButton aria-label="Page layout view"><PageViewIcon /></ViewButton>
        <ViewButton aria-label="Page break view"><BreakViewIcon /></ViewButton>
        <ZoomButton aria-label="Zoom out"><Plus s={8} minus /></ZoomButton>
        <ZoomSlider type="range" aria-label="Zoom" min="0" max="200" defaultValue="100" />
        <ZoomButton aria-label="Zoom in"><Plus s={8} /></ZoomButton>
        <ZoomValue>100%</ZoomValue>
      </StatusBar>

      <Menu role="menu">
        {MENU.map((section) => (
          <React.Fragment key={section.title}>
            <MenuHead>{section.title}</MenuHead>
            {section.items.map(([kind, text]) => (
              <MenuItem key={text} role="menuitem"><ClipIcon kind={kind} />{text}</MenuItem>
            ))}
            <MenuRule />
          </React.Fragment>
        ))}
        <MenuItem role="menuitem" $plain>Paste Special...</MenuItem>
      </Menu>

      <Highlight $x={11} $y={23} $w={64} $h={35} />
      <Highlight $x={40} $y={48} $w={24} $h={46} />
      <Highlight $x={10} $y={318} $w={266} $h={37} />
    </Window>
  );
}
